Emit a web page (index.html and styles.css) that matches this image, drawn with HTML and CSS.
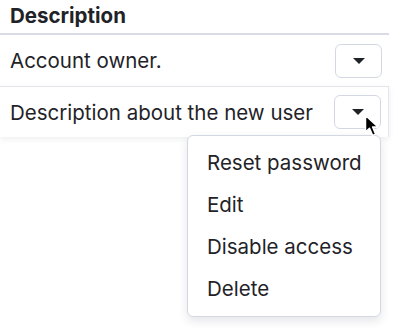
FILE: index.html
```html
<!DOCTYPE html>
<html lang="en">
<head>
  <meta charset="UTF-8" />
  <title>Users</title>
  <link rel="stylesheet" href="styles.css">
</head>
<body>
  <div class="users-table">
    <div class="table-head">Description</div>
    <div class="table-row">
      <span class="cell-text">Account owner.</span>
      <button class="row-menu-btn"><span class="caret"></span></button>
    </div>
    <div class="table-row hovered">
      <span class="cell-text">Description about the new user</span>
      <div class="menu-wrap">
        <button class="row-menu-btn"><span class="caret"></span></button>
        <svg class="cursor" width="18" height="24" viewBox="0 0 18 24">
          <path d="M1.5 1.5 L1.5 18 L5.5 14.2 L8.6 21.4 L11.6 20.1 L8.6 13 L14 13 Z" fill="#000" stroke="#fff" stroke-width="1.5" stroke-linejoin="round"/>
        </svg>
        <ul class="row-menu">
          <li>Reset password</li>
          <li>Edit</li>
          <li>Disable access</li>
          <li>Delete</li>
        </ul>
      </div>
    </div>
  </div>
</body>
</html>
```

FILE: styles.css
```css
* { box-sizing: border-box; }
html, body { height: 100%; }
body {
  margin: 0;
  font-family: Inter, "Noto Sans", sans-serif;
  color: #1f2328;
  background: #fff;
}
.users-table {
  width: 389px;
}
.table-head {
  font-size: 20.5px;
  font-weight: 700;
  padding: 3px 10px 0;
  height: 35px;
  border-bottom: 2px solid #d8dce6;
}
.table-row {
  display: flex;
  align-items: center;
  justify-content: space-between;
  height: 51px;
  padding: 0 7px 0 10px;
  font-size: 20.5px;
}
.table-row.hovered {
  border-top: 1px solid #e3e6ee;
  border-right: 1px solid #e3e6ee;
  box-shadow: 0 2px 6px rgba(30, 40, 70, 0.08);
}
.row-menu-btn {
  width: 47px;
  height: 34px;
  border: 1px solid #d3d8e3;
  border-radius: 6px;
  background: #fff;
  display: flex;
  align-items: center;
  justify-content: center;
  padding: 0;
}
.caret {
  width: 0;
  height: 0;
  border-left: 6px solid transparent;
  border-right: 6px solid transparent;
  border-top: 6px solid #1f2328;
}
.menu-wrap {
  position: relative;
}
.cursor {
  position: absolute;
  left: 30px;
  top: 19px;
  z-index: 3;
}
.row-menu {
  position: absolute;
  right: 0;
  top: 40px;
  width: 194px;
  margin: 0;
  padding: 6px 0;
  list-style: none;
  background: #fff;
  border: 1px solid #d3d8e3;
  border-radius: 6px;
  box-shadow: 0 4px 10px rgba(30, 40, 70, 0.12);
  z-index: 2;
}
.row-menu li {
  padding: 0 8px 0 19px;
  height: 42px;
  line-height: 42px;
  font-size: 20.5px;
  white-space: nowrap;
}
```
